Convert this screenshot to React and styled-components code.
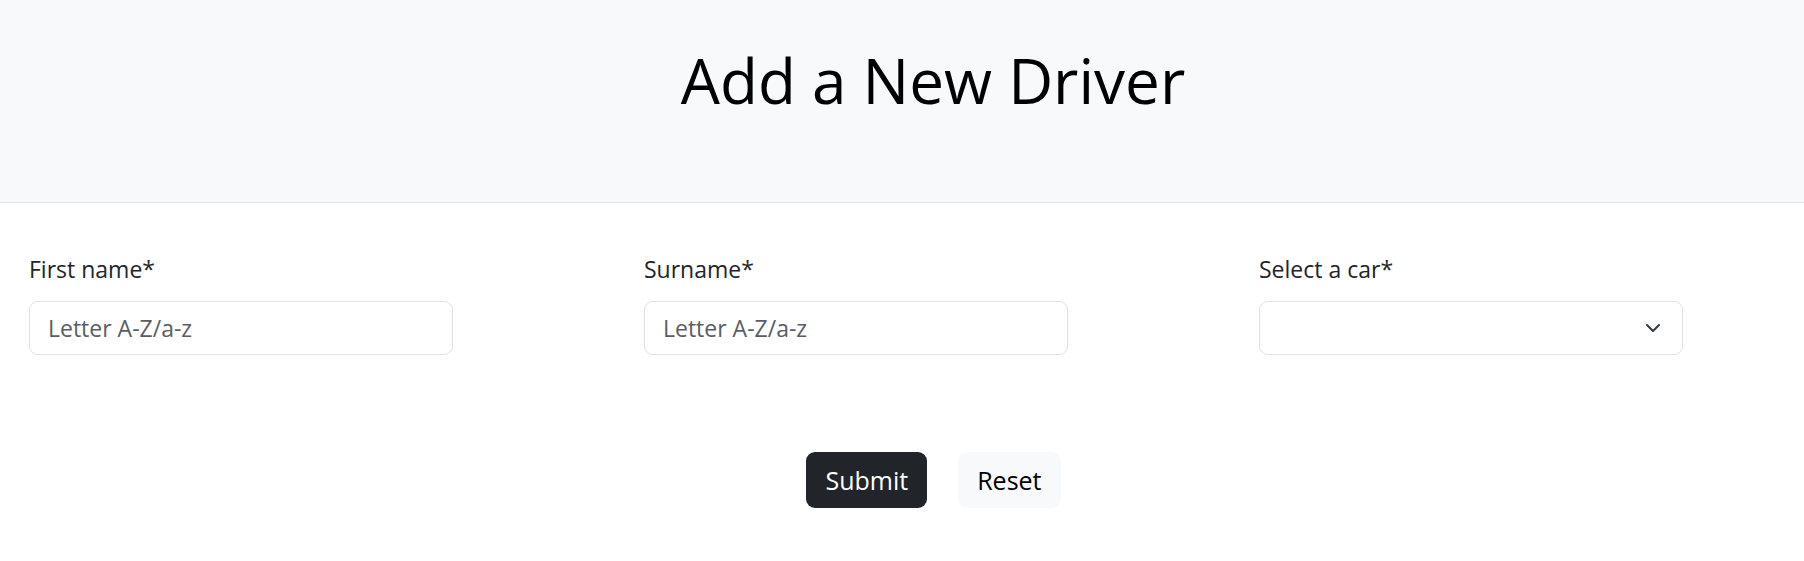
import styled, { createGlobalStyle } from "styled-components"

const Global = createGlobalStyle`
    body {
        margin: 0;
        background: #fff;
        font-family: "Open Sans", "Noto Sans", sans-serif;
        color: #212529;
    }
`
const Header = styled.header`
    height: 202px;
    box-sizing: content-box;
    background-color: #f8f9fa;
    border-bottom: 1px solid #dee2e6;
    padding-left: 62px;
    display: flex;
    justify-content: center;
`
const Title = styled.h1`
    margin: 43px 0 0 0;
    font-size: 62px;
    font-weight: 400;
    line-height: 1.2;
    color: #000;
`
const Form = styled.form`
    padding: 48px 29px 0 29px;
`
const Fields = styled.div`
    display: grid;
    grid-template-columns: repeat(3, 424px);
    column-gap: 191px;
`
const Field = styled.div`
    display: flex;
    flex-direction: column;
`
const Label = styled.label`
    font-size: 23px;
    line-height: 36px;
    margin-bottom: 14px;
`
const Input = styled.input`
    box-sizing: border-box;
    height: 54px;
    width: 100%;
    padding: 0 18px;
    font-family: inherit;
    font-size: 23px;
    color: #212529;
    border: 1px solid #dee2e6;
    border-radius: 9px;
    background: #fff;
    &::placeholder {
        color: #595e63;
    }
`
const SelectWrap = styled.div`
    position: relative;
`
const Select = styled.select`
    box-sizing: border-box;
    height: 54px;
    width: 100%;
    padding: 0 18px;
    font-family: inherit;
    font-size: 23px;
    border: 1px solid #dee2e6;
    border-radius: 9px;
    background: #fff;
    appearance: none;
`
const Chevron = styled.svg`
    position: absolute;
    right: 22px;
    top: 19px;
    pointer-events: none;
`
const Buttons = styled.div`
    display: flex;
    justify-content: center;
    gap: 31px;
    margin-top: 97px;
    padding-left: 63px;
`
const Button = styled.button`
    height: 56px;
    padding: 0 19px;
    font-family: inherit;
    font-size: 25px;
    border: none;
    border-radius: 9px;
    cursor: pointer;
    color: ${p => (p.$dark ? "#fff" : "#000")};
    background-color: ${p => (p.$dark ? "#212529" : "#f8f9fa")};
`

function App() {
    return (
        <>
            <Global />
            <Header>
                <Title>Add a New Driver</Title>
            </Header>
            <Form onSubmit={e => e.preventDefault()}>
                <Fields>
                    <Field>
                        <Label htmlFor="first">First name*</Label>
                        <Input id="first" placeholder="Letter A-Z/a-z" />
                    </Field>
                    <Field>
                        <Label htmlFor="surname">Surname*</Label>
                        <Input id="surname" placeholder="Letter A-Z/a-z" />
                    </Field>
                    <Field>
                        <Label htmlFor="car">Select a car*</Label>
                        <SelectWrap>
                            <Select id="car" defaultValue="">
                                <option value=""></option>
                            </Select>
                            <Chevron width="16" height="16" viewBox="0 0 16 16">
                                <path d="M2 5l6 6 6-6" fill="none" stroke="#343a40" strokeWidth="2" strokeLinecap="round" strokeLinejoin="round" />
                            </Chevron>
                        </SelectWrap>
                    </Field>
                </Fields>
                <Buttons>
                    <Button $dark type="submit">Submit</Button>
                    <Button type="reset">Reset</Button>
                </Buttons>
            </Form>
        </>
    )
}

export default App
